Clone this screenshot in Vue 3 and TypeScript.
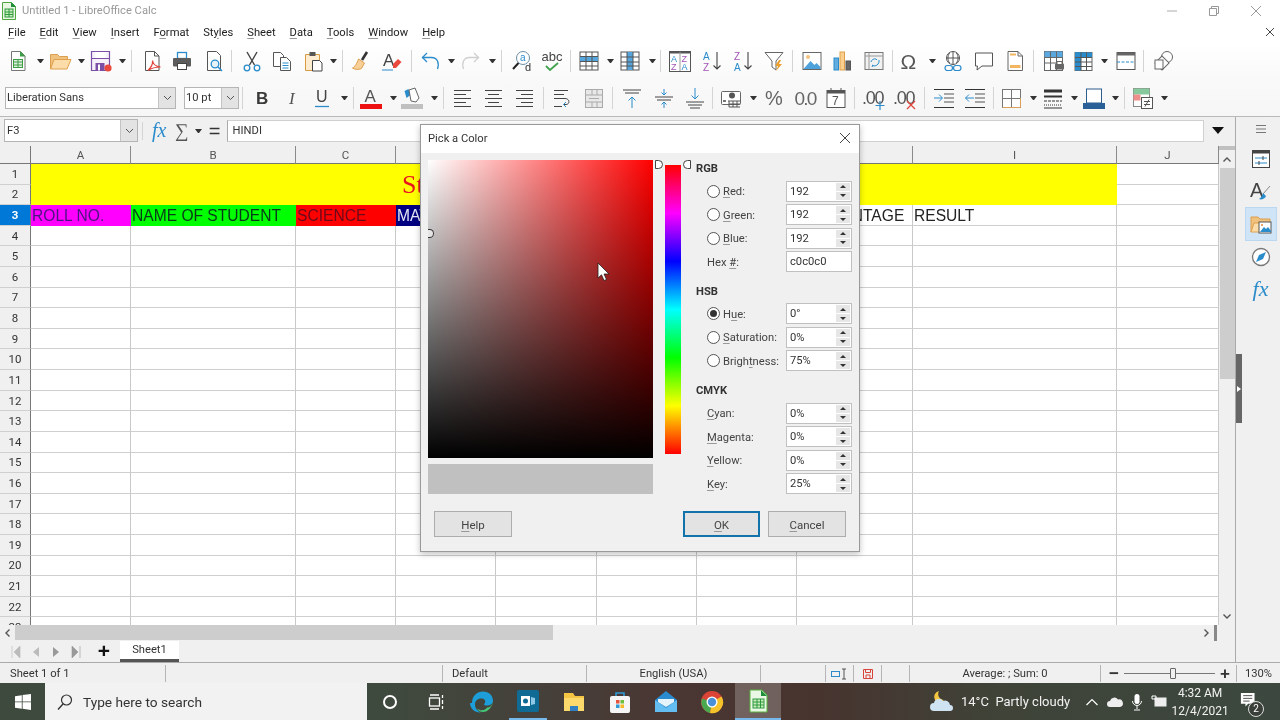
<script setup lang="ts">
type Slot = [string, number]

const FONT = `font-family="Liberation Sans, sans-serif"`
const B = '#2b8ccb'

const icons: Record<string, string> = {
  new: `<path d="M5.5 2.5h9l4.5 4.500v14.500H5.500z" fill="#fff" stroke="#777"/><path d="M14 2l5.500 5.500H14z" fill="#3f9c46"/><rect x="7.500" y="10.500" width="9" height="8" fill="#dff0dc" stroke="#3f9c46"/><path d="M7.500 13h9M7.500 16h9M12 10.500v8" stroke="#3f9c46"/>`,
  open: `<path d="M2.500 20V5.500h7l2 2h8v3" fill="#f0c27f" stroke="#dc9f4d"/><path d="M6 10.500h17L19 20H2.500z" fill="#fcdca9" stroke="#e0a04c"/>`,
  save: `<path d="M2.500 2.500h18v19h-18z" fill="#f5f0fa" stroke="#7b4fa6" stroke-width="1.200"/><path d="M2.500 9.500h18" stroke="#7b4fa6"/><path d="M6 3h11v6H6z" fill="#fff"/><path d="M6.500 14h9v7.500h-9z" fill="#7b4fa6"/><path d="M9 15.500h2v6H9z" fill="#fff"/><circle cx="19" cy="19" r="3.600" fill="#e9483d"/>`,
  pdf: `<path d="M5.500 2.500h9l4.500 4.500v14.500h-13.500z" fill="#fff" stroke="#555"/><path d="M14.500 2.500V7H19" fill="none" stroke="#555"/><path d="M8 21.500c3-3 5-7 4.500-10 .5 3.500 3 6 8 6.500-5 0-9 1-12.500 3.500z" fill="none" stroke="#e0443a" stroke-width="1.200"/>`,
  print: `<rect x="7.500" y="3.500" width="9" height="6" fill="#fff" stroke="#2b8ccb" stroke-width="1.300"/><rect x="3" y="9" width="18" height="8.500" rx="1" fill="#5c5c5c"/><rect x="7.500" y="14.500" width="9" height="6" fill="#fff" stroke="#444"/>`,
  preview: `<path d="M5.500 2.500h9l4 4v15h-13z" fill="#fff" stroke="#555"/><circle cx="13" cy="15" r="3.800" fill="#e6f3fb" stroke="${B}" stroke-width="1.300"/><path d="M16 18l4 4" stroke="${B}" stroke-width="1.600"/>`,
  cut: `<path d="M7 3l7.500 13M17 3L9.500 16" stroke="#444" fill="none" stroke-width="1.400"/><circle cx="7" cy="19" r="2.800" fill="none" stroke="${B}" stroke-width="1.300"/><circle cx="17" cy="19" r="2.800" fill="none" stroke="${B}" stroke-width="1.300"/>`,
  copy: `<path d="M3.500 3.500h7l3 3v11h-10z" fill="#fff" stroke="#555"/><path d="M10.500 8.500h6l4 4v9h-10z" fill="#fff" stroke="#555"/><path d="M12.500 14h6M12.500 16.500h6M12.500 19h6" stroke="${B}"/>`,
  paste: `<path d="M4.500 5.500h14v16h-14z" fill="#fdeccf" stroke="#d99a44"/><rect x="8.500" y="3" width="6" height="4" fill="#555"/><path d="M11.500 11.500h7l2.500 2.500v8h-9.500z" fill="#fff" stroke="#444"/>`,
  clone: `<path d="M18 3l-5 8" stroke="#333" stroke-width="2.600"/><path d="M9.500 10l6 4-3 5.500c-3 1.500-7 1-9-.5 2.500-1 4.500-5 6-9z" fill="#f7cf97" stroke="#dc9f4d"/>`,
  clear: `<text x="3" y="17" font-size="17" fill="#444" ${FONT}>A</text><path d="M13 15l5-5 3.500 3-5.500 6h-3z" fill="#e9483d"/><path d="M2 21h11" stroke="${B}"/>`,
  undo: `<path d="M19.500 20c2-6 0-11.500-6-11.500H4" fill="none" stroke="${B}" stroke-width="1.300"/><path d="M9 4L4.500 8.500 9 13" fill="none" stroke="${B}" stroke-width="1.300"/>`,
  redo: `<path d="M4.500 20c-2-6 0-11.500 6-11.500H20" fill="none" stroke="#cfcfcf" stroke-width="1.300"/><path d="M15 4l4.500 4.500L15 13" fill="none" stroke="#cfcfcf" stroke-width="1.300"/>`,
  find: `<circle cx="13" cy="9" r="6.500" fill="#fff" stroke="#6a8ea8"/><path d="M8.500 14L3 20" stroke="#222" stroke-width="2"/><text x="10" y="12" font-size="10" fill="${B}" ${FONT}>a</text><text x="15" y="22" font-size="11" fill="#333" ${FONT}>d</text>`,
  spell: `<text x="1.500" y="12" font-size="13" fill="#444" ${FONT}>abc</text><path d="M6 17l4 4 8-7" fill="none" stroke="#3fa34d" stroke-width="1.800"/>`,
  rows: `<rect x="3" y="3" width="18" height="18" fill="#fff" stroke="#555"/><rect x="3" y="7.500" width="18" height="5" fill="#56a5dc"/><path d="M3 7.500h18M3 12.500h18M3 17h18M9 3v18M15 3v18" stroke="#555"/>`,
  cols: `<rect x="3" y="3" width="18" height="18" fill="#fff" stroke="#555"/><rect x="9" y="3" width="6" height="18" fill="#56a5dc"/><path d="M3 8h18M3 13h18M3 17h18M9 3v18M15 3v18" stroke="#555"/>`,
  sort: `<rect x="1.500" y="2.500" width="21" height="20" fill="#fff" stroke="#555"/><path d="M1.500 3.500h21" stroke="#555" stroke-width="2"/><path d="M12 3v19" stroke="#999"/><text x="3" y="13" font-size="9" fill="#2b8ccb" ${FONT}>A</text><text x="3" y="21" font-size="9" fill="#a355b5" ${FONT}>Z</text><text x="13.500" y="13" font-size="9" fill="#a355b5" ${FONT}>Z</text><text x="13.500" y="21" font-size="9" fill="#2b8ccb" ${FONT}>A</text>`,
  asc: `<text x="3" y="11" font-size="10" fill="#2b8ccb" ${FONT}>A</text><text x="3" y="22" font-size="10" fill="#a355b5" ${FONT}>Z</text><path d="M17 3v17M13.500 16.500l3.500 3.500 3.500-3.500" fill="none" stroke="#444" stroke-width="1.100"/>`,
  desc: `<text x="3" y="11" font-size="10" fill="#a355b5" ${FONT}>Z</text><text x="3" y="22" font-size="10" fill="#2b8ccb" ${FONT}>A</text><path d="M17 3v17M13.500 16.500l3.500 3.500 3.500-3.500" fill="none" stroke="#444" stroke-width="1.100"/>`,
  filter: `<path d="M3 3.500h18L14 12v9l-4-3v-6z" fill="#fff" stroke="#666"/><path d="M17 11l-4 6h3l-2 5 6-7h-3l2-4z" fill="#eb9f2d"/>`,
  image: `<rect x="3" y="3.500" width="18" height="17" fill="#fff" stroke="#666"/><circle cx="8" cy="8" r="2" fill="#f4c27c"/><path d="M3.500 20l7-8 4 4 2-2 4 4v2h-17z" fill="#4da2dc"/>`,
  chart: `<rect x="4" y="9" width="4.500" height="12" fill="#62acdf" stroke="#2b8ccb"/><rect x="10" y="3" width="4.500" height="18" fill="#fbd08e" stroke="#e0a04c"/><rect x="16" y="12" width="4.500" height="9" fill="#666" stroke="#555"/>`,
  pivot: `<rect x="3" y="3.500" width="18" height="17" fill="#f2f2f2" stroke="#777"/><path d="M3 7h18M7 3.500v17" stroke="#999"/><path d="M17 11a5 5 0 0 1-5 6l-2-1M11 16l-1 2M9 13a4 4 0 0 1 5-3l1 1" fill="none" stroke="${B}"/>`,
  omega: `<text x="2.500" y="20" font-size="21" fill="#555" ${FONT}>Ω</text>`,
  link: `<circle cx="12" cy="9" r="6.500" fill="#fff" stroke="#555"/><path d="M5.500 9h13M12 2.500v13M8.500 4c-2 3-2 7 0 10M15.500 4c2 3 2 7 0 10" fill="none" stroke="#555"/><rect x="4" y="16.500" width="7.500" height="5" rx="2.500" fill="none" stroke="${B}" stroke-width="1.200"/><rect x="12.500" y="16.500" width="7.500" height="5" rx="2.500" fill="none" stroke="${B}" stroke-width="1.200"/>`,
  comment: `<path d="M3.500 4h17v13H10l-5 4 .5-4h-2z" fill="#fff" stroke="#555"/>`,
  header: `<path d="M5 2.500h10l4.500 4.500v14.500H5z" fill="#fff" stroke="#666"/><path d="M15 2.500V7h4.500" fill="none" stroke="#666"/><rect x="7" y="16" width="10.500" height="3" fill="#f3b562"/><rect x="7" y="4.500" width="6" height="2" fill="#f3b562"/>`,
  namedsheet: `<rect x="2.500" y="2.500" width="18" height="19" fill="#fff" stroke="#666"/><rect x="2.500" y="2.500" width="18" height="6" fill="#5ba8df"/><path d="M2.500 8.500h18M2.500 14h18M8.500 2.500v19M14.500 2.500v19" stroke="#666"/><rect x="13" y="14.500" width="9" height="6" rx="1" fill="#666"/><rect x="15" y="12.500" width="5" height="3" fill="#fff" stroke="#666"/>`,
  datagrid: `<rect x="4" y="3.500" width="17" height="18" fill="#fff" stroke="#666"/><rect x="4" y="3.500" width="6" height="18" fill="#2b8ccb"/><rect x="4" y="3.500" width="17" height="5" fill="#2b8ccb"/><path d="M4 8.500h17M4 13h17M4 17.500h17M10 3.500v18M15.500 3.500v18" stroke="#555"/>`,
  split: `<rect x="3" y="3.500" width="18" height="17" fill="#fff" stroke="#555"/><rect x="3" y="3.500" width="18" height="3" fill="#666"/><path d="M3 13h18" stroke="${B}" stroke-dasharray="3 1.500" stroke-width="1.200"/>`,
  shapes: `<circle cx="15" cy="8" r="5.500" fill="#fff" stroke="#666"/><rect x="5" y="9" width="10" height="10" transform="rotate(45 10 14)" fill="#fff" stroke="#666"/><rect x="3" y="11" width="8" height="9" fill="#fff" stroke="#666"/>`,
  bold: `<text x="6" y="18" font-size="17" font-weight="700" fill="#3a3a38" ${FONT}>B</text>`,
  italic: `<text x="8" y="18" font-size="17" font-style="italic" fill="#555" font-family="Liberation Serif, serif">I</text>`,
  under: `<text x="6" y="16" font-size="16" fill="#444" ${FONT}>U</text><path d="M5 20.500h14" stroke="${B}" stroke-width="1.300"/>`,
  fontcolor: `<text x="5.500" y="16" font-size="17" fill="#555" ${FONT}>A</text><rect x="1" y="18" width="22" height="5" fill="#ee1111"/>`,
  bgcolor: `<path d="M4.500 5l4-2 2 6-4 3z" fill="#2b8ccb"/><path d="M9 4l6-2 4 10-3 4-5-1z" fill="#fff" stroke="#666"/><rect x="1" y="18" width="22" height="5" fill="#c0c0c0"/>`,
  al: `<path d="M3 4.500h17M3 8.500h12M3 12.500h17M3 16.500h12M3 20.500h17" stroke="#444" stroke-width="1.100"/>`,
  ac: `<path d="M3 4.500h17M6 8.500h11M3 12.500h17M6 16.500h11M3 20.500h17" stroke="#444" stroke-width="1.100"/>`,
  ar: `<path d="M3 4.500h17M8 8.500h12M3 12.500h17M8 16.500h12M3 20.500h17" stroke="#444" stroke-width="1.100"/>`,
  wrap: `<path d="M3 4.500h14M3 8.500h10M3 20.500h8M3 12.500h11c5 0 5 6 1 6h-2" fill="none" stroke="#444"/><path d="M15 16l-2.500 2.500L15 21" fill="none" stroke="${B}"/>`,
  merge: `<rect x="3.500" y="3.500" width="17" height="18" fill="#e8e8e8" stroke="#aaa"/><path d="M3.500 9h17M3.500 16h17M10 3.500V9M15 3.500V9M10 16v5.500M15 16v5.500" stroke="#aaa"/><path d="M7 12.500h10" stroke="#aaa"/>`,
  vt: `<path d="M3 4h18M5 7h14" stroke="#444"/><path d="M12 22V11M8.500 14.500L12 11l3.500 3.500" fill="none" stroke="${B}"/>`,
  vc: `<path d="M3 11h18M5 14h14" stroke="#444"/><path d="M12 3v6M9.500 6.500L12 9l2.500-2.500M12 22v-6M9.500 18.500L12 16l2.500 2.500" fill="none" stroke="${B}"/>`,
  vb: `<path d="M3 16h18M5 19h14M7 22h10" stroke="#444"/><path d="M12 2v11M8.500 9.500L12 13l3.500-3.500" fill="none" stroke="${B}"/>`,
  currency: `<rect x="2.500" y="5.500" width="19" height="13" rx="1" fill="#fff" stroke="#666"/><circle cx="13" cy="9.500" r="3" fill="#555"/><path d="M9 15h12M10 18h11M10 21h11M10 15v6M14 15v6M18 15v6" stroke="#555"/><rect x="4" y="14" width="3" height="2" fill="#777"/>`,
  percent: `<text x="3" y="19" font-size="20" fill="#666" ${FONT}>%</text>`,
  number: `<text x="1.500" y="19" font-size="19" letter-spacing="-1.800" fill="#666" ${FONT}>0.0</text>`,
  date: `<rect x="3" y="4.500" width="18" height="17" fill="#fff" stroke="#555"/><rect x="3" y="4.500" width="18" height="3" fill="#555"/><path d="M7 2v3M17 2v3" stroke="#555"/><text x="8" y="19" font-size="12" fill="#555" ${FONT}>7</text>`,
  addDec: `<text x="0" y="18" font-size="18" letter-spacing="-1.200" fill="#555" ${FONT}>.00</text><path d="M18 15v9M13.500 19.500h9" stroke="${B}" stroke-width="1.200"/>`,
  delDec: `<text x="0" y="18" font-size="18" letter-spacing="-1.200" fill="#555" ${FONT}>.00</text><path d="M14 15l8 8M22 15l-8 8" stroke="#e0443a" stroke-width="1.200"/>`,
  indent: `<path d="M12 8h10M12 12h10M12 16h10" stroke="#555"/><path d="M2 3.500h20M2 21.500h20" stroke="#333"/><path d="M2 12h8M7 8.500l3.500 3.500L7 15.500" fill="none" stroke="${B}"/>`,
  outdent: `<path d="M12 8h10M12 12h10M12 16h10" stroke="#555"/><path d="M2 3.500h20M2 21.500h20" stroke="#333"/><path d="M11 12H2.500M6 8.500L2.500 12 6 15.500" fill="none" stroke="${B}"/>`,
  borders: `<rect x="3.500" y="3.500" width="18" height="18" fill="#fff" stroke="#777"/><path d="M12.500 3.500v18M3.500 12.500h18" stroke="#777"/><path d="M3.500 21.500h18M21.500 12v9.500" stroke="#d7a15c"/>`,
  bstyle: `<path d="M3 5h18" stroke="#333" stroke-width="3"/><path d="M3 10.500h18" stroke="#333" stroke-width="2"/><path d="M3 15h18" stroke="#333" stroke-dasharray="3 1"/><path d="M3 19h18" stroke="#333" stroke-dasharray="1 1"/><path d="M3 22h18" stroke="#333"/>`,
  bcolor: `<rect x="4.500" y="3" width="15" height="14" fill="#fff" stroke="#2d5f8e"/><rect x="1" y="17" width="22" height="6" fill="#2a6097"/>`,
  cond: `<rect x="2.500" y="2.500" width="16" height="18" fill="#fff" stroke="#888"/><rect x="2.500" y="2.500" width="16" height="6" fill="#87c89c"/><rect x="2.500" y="8.500" width="7" height="6" fill="#ee8f8b"/><rect x="10.500" y="11.500" width="11" height="11" fill="#fff" stroke="#555"/><path d="M13 15.500h6M13 18.500h6M18 13.500l-4 7" stroke="#555"/>`,
}

// turn the x centre of every slot into a flow gap after the slot before it
function place(slots: Slot[], start = 0) {
  let right = start
  return slots.map(([name, x]) => {
    const w = name === 'c' ? 7 : name === 's' ? 1 : 24
    const gap = x - w / 2 - right
    right = x + w / 2
    return { name, gap, kind: name === 'c' ? 'caret' : name === 's' ? 'sep' : 'icon' }
  })
}

const row1 = place([
  ['new', 18], ['c', 40], ['open', 60], ['c', 81], ['save', 101], ['c', 122], ['s', 131],
  ['pdf', 152], ['print', 182], ['preview', 214], ['s', 231], ['cut', 251.5], ['copy', 282],
  ['paste', 313], ['c', 333], ['s', 342], ['clone', 361], ['clear', 392], ['s', 411], ['undo', 430],
  ['c', 451], ['redo', 471], ['c', 492], ['s', 501], ['find', 522], ['spell', 552], ['s', 570],
  ['rows', 589], ['c', 610], ['cols', 630], ['c', 652], ['s', 660], ['sort', 680], ['asc', 711.5],
  ['desc', 743], ['filter', 774], ['s', 792], ['image', 811.5], ['chart', 842], ['pivot', 873.5],
  ['s', 892], ['omega', 910], ['c', 932], ['link', 953], ['comment', 984], ['header', 1015],
  ['s', 1033], ['namedsheet', 1054], ['datagrid', 1082.5], ['c', 1104], ['split', 1125.5], ['s', 1143],
  ['shapes', 1163.5],
])

const row2 = place([
  ['s', 242.5], ['bold', 261.5], ['italic', 293], ['under', 322], ['c', 344], ['s', 353], ['fontcolor', 371],
  ['c', 393], ['bgcolor', 412], ['c', 434], ['s', 443], ['al', 462.5], ['ac', 494], ['ar', 525],
  ['s', 543], ['wrap', 563], ['merge', 594], ['s', 612], ['vt', 632], ['vc', 663.5], ['vb', 694.5],
  ['s', 712], ['currency', 731], ['c', 753], ['percent', 774], ['number', 804.5], ['date', 836],
  ['s', 854], ['addDec', 874], ['delDec', 905], ['s', 924], ['indent', 944], ['outdent', 974.5],
  ['s', 993], ['borders', 1011], ['c', 1033], ['bstyle', 1052.5], ['c', 1074], ['bcolor', 1093.5],
  ['c', 1115], ['s', 1124], ['cond', 1143], ['c', 1164],
], 239)

const menus = [
  { pre: '', key: 'F', rest: 'ile' },
  { pre: '', key: 'E', rest: 'dit' },
  { pre: '', key: 'V', rest: 'iew' },
  { pre: '', key: 'I', rest: 'nsert' },
  { pre: 'F', key: 'o', rest: 'rmat' },
  { pre: 'St', key: 'y', rest: 'les' },
  { pre: '', key: 'S', rest: 'heet' },
  { pre: '', key: 'D', rest: 'ata' },
  { pre: '', key: 'T', rest: 'ools' },
  { pre: '', key: 'W', rest: 'indow' },
  { pre: '', key: 'H', rest: 'elp' },
]

const columns = ['A', 'B', 'C', 'D', 'E', 'F', 'G', 'H', 'I', 'J']
const headerCells: Record<string, { text: string; cls: string }> = {
  A: { text: 'ROLL NO.', cls: 'c-magenta' },
  B: { text: 'NAME OF STUDENT', cls: 'c-green' },
  C: { text: 'SCIENCE', cls: 'c-red' },
  D: { text: 'MATHS', cls: 'c-navy' },
  E: { text: 'ENGLISH', cls: '' },
  F: { text: 'HINDI', cls: '' },
  G: { text: 'TOTAL', cls: '' },
  H: { text: 'PERCENTAGE', cls: '' },
  I: { text: 'RESULT', cls: '' },
}

interface Field { pre: string; key: string; rest: string; value: string; radio?: boolean; checked?: boolean; plain?: boolean }
const colourGroups: { title: string; fields: Field[] }[] = [
  {
    title: 'RGB',
    fields: [
      { pre: '', key: 'R', rest: 'ed:', value: '192', radio: true },
      { pre: '', key: 'G', rest: 'reen:', value: '192', radio: true },
      { pre: '', key: 'B', rest: 'lue:', value: '192', radio: true },
      { pre: 'Hex ', key: '#', rest: ':', value: 'c0c0c0', plain: true },
    ],
  },
  {
    title: 'HSB',
    fields: [
      { pre: 'H', key: 'u', rest: 'e:', value: '0°', radio: true, checked: true },
      { pre: '', key: 'S', rest: 'aturation:', value: '0%', radio: true },
      { pre: 'Brigh', key: 't', rest: 'ness:', value: '75%', radio: true },
    ],
  },
  {
    title: 'CMYK',
    fields: [
      { pre: '', key: 'C', rest: 'yan:', value: '0%' },
      { pre: '', key: 'M', rest: 'agenta:', value: '0%' },
      { pre: '', key: 'Y', rest: 'ellow:', value: '0%' },
      { pre: '', key: 'K', rest: 'ey:', value: '25%' },
    ],
  },
]

const taskIcons: { name: string; svg: string; open?: boolean; active?: boolean }[] = [
  { name: 'cortana', svg: `<circle cx="12" cy="12" r="6" fill="none" stroke="#fff" stroke-width="2"/>` },
  { name: 'tasks', svg: `<path d="M6 5h9M6 19h9" stroke="#fff" stroke-width="1.300"/><rect x="5.500" y="8" width="10" height="8" fill="none" stroke="#fff" stroke-width="1.300"/><path d="M18.500 5v3M18.500 10v4M18.500 16v3" stroke="#fff" stroke-width="1.300"/>` },
  { name: 'edge', svg: `<path d="M2 13C2 6 7 1.500 13 1.500c6 0 10 4 10 9.500 0 3-3 4.500-6 4.500-2 0-3-.5-3-1.500 2-1 2-5-2-5.500-4-.5-7 2-7 6 0 4 3 7 6 8-6 .5-11-4-11-9.500z" fill="#1d9ed9"/><path d="M23 11c-.5 6-5 11-10 11-3 0-5-1.500-6-3.500 3 2.500 8 2.500 10-1 1 0 5 0 6-6.500z" fill="#46c77a"/>` },
  { name: 'outlook', open: true, svg: `<rect x="1" y="1" width="22" height="22" rx="2" fill="#0f6a94"/><rect x="5" y="7" width="9" height="10" fill="#fff"/><circle cx="9.500" cy="12" r="2.500" fill="#0f6a94"/><path d="M15 8l4 1v6l-4 1z" fill="#8fc8e6"/>` },
  { name: 'files', svg: `<path d="M2 3h9l2 3h9v15H2z" fill="#f4c542"/><path d="M2 8h20v13H2z" fill="#fbd96a"/><rect x="8" y="16" width="8" height="5" fill="#2f7fc2"/>` },
  { name: 'store', svg: `<rect x="2" y="6" width="20" height="17" rx="2" fill="#f5f5f5"/><path d="M8 6V3h8v3" fill="none" stroke="#2e9ad6" stroke-width="1.600"/><rect x="8" y="10" width="3.500" height="3.500" fill="#e8533f"/><rect x="12.500" y="10" width="3.500" height="3.500" fill="#6fbf3f"/><rect x="8" y="14.500" width="3.500" height="3.500" fill="#2e9ad6"/><rect x="12.500" y="14.500" width="3.500" height="3.500" fill="#f5b921"/>` },
  { name: 'mail', svg: `<path d="M1 10L12 1l11 9v12H1z" fill="#2a8bd0"/><path d="M1 10l11 8 11-8v12H1z" fill="#63bdf0"/><path d="M4 9h16v3l-8 5-8-5z" fill="#e7f3fb"/>` },
  { name: 'chrome', svg: `<circle cx="12" cy="12" r="11" fill="#dc4437"/><path d="M12 12L2 8.500A11 11 0 0 0 10 23z" fill="#4aa84f"/><path d="M12 12l9.500-5.500A11 11 0 0 1 10 23z" fill="#f5c329"/><circle cx="12" cy="12" r="5.500" fill="#fff"/><circle cx="12" cy="12" r="4.200" fill="#4a90d9"/>` },
  { name: 'calc', active: true, svg: `<path d="M4 1h12l5 5v17H4z" fill="#eaf7e4" stroke="#57b33f"/><path d="M15 1l6 6h-6z" fill="#1f8f3a"/><rect x="7" y="10" width="11" height="9" fill="#c9ecbc" stroke="#2e9a3e"/><path d="M7 13h11M7 16h11M11 10v9M14.500 10v9" stroke="#2e9a3e"/>` },
]
</script>

<template>
  <div class="app">
    <header class="top">
      <div class="titlebar">
        <svg class="doc-icon" width="14" height="18" viewBox="0 0 14 18">
          <path d="M.5.5h9l4 4v13H.5z" fill="#e9f6e2" stroke="#4fa83f" />
          <path d="M9 0l5 5H9z" fill="#1f8f3a" />
          <rect x="3" y="7" width="8" height="8" fill="#cbeebd" stroke="#2e9a3e" />
          <path d="M3 10h8M3 12.500h8M7 7v8" stroke="#2e9a3e" />
        </svg>
        <span class="doc-title">Untitled 1 - LibreOffice Calc</span>
        <div class="win-controls">
          <svg width="12" height="12" viewBox="0 0 12 12"><path d="M1 6h10" stroke="#aaa" /></svg>
          <svg width="12" height="12" viewBox="0 0 12 12"><path d="M1.500 3.500h7v7h-7zM3.500 3.500v-2h7v7h-2" fill="none" stroke="#999" /></svg>
          <svg width="12" height="12" viewBox="0 0 12 12"><path d="M1 1l10 10M11 1L1 11" stroke="#999" /></svg>
        </div>
      </div>

      <nav class="menubar">
        <span v-for="m in menus" :key="m.pre + m.key" class="menu">{{ m.pre }}<u>{{ m.key }}</u>{{ m.rest }}</span>
        <svg class="doc-close" width="10" height="10" viewBox="0 0 10 10"><path d="M1 1l8 8M9 1L1 9" stroke="#444" /></svg>
      </nav>

      <div class="toolbar toolbar-std">
        <template v-for="(item, i) in row1" :key="i">
          <svg v-if="item.kind === 'icon'" class="icon" width="24" height="24" viewBox="0 0 24 24" :style="{ marginLeft: item.gap + 'px' }" v-html="icons[item.name]" />
          <span v-else :class="item.kind" :style="{ marginLeft: item.gap + 'px' }" />
        </template>
      </div>

      <div class="toolbar toolbar-fmt">
        <div class="combo font-combo">
          <span class="combo-text">Liberation Sans</span>
          <span class="combo-btn"><svg width="9" height="6" viewBox="0 0 9 6"><path d="M1 1l3.500 3.500L8 1" fill="none" stroke="#555" /></svg></span>
        </div>
        <div class="combo size-combo">
          <span class="combo-text">10 pt</span>
          <span class="combo-btn"><svg width="9" height="6" viewBox="0 0 9 6"><path d="M1 1l3.500 3.500L8 1" fill="none" stroke="#555" /></svg></span>
        </div>
        <template v-for="(item, i) in row2" :key="i">
          <svg v-if="item.kind === 'icon'" class="icon" width="24" height="24" viewBox="0 0 24 24" :style="{ marginLeft: item.gap + 'px' }" v-html="icons[item.name]" />
          <span v-else :class="item.kind" :style="{ marginLeft: item.gap + 'px' }" />
        </template>
      </div>
    </header>

    <div class="workspace">
      <div class="main">
        <div class="formula-bar">
          <div class="combo name-box">
            <span class="combo-text">F3</span>
            <span class="combo-btn"><svg width="9" height="6" viewBox="0 0 9 6"><path d="M1 1l3.500 3.500L8 1" fill="none" stroke="#555" /></svg></span>
          </div>
          <span class="sep fb-sep" />
          <span class="fx">fx</span>
          <span class="sigma">∑</span>
          <span class="caret fb-caret" />
          <span class="equals">=</span>
          <div class="formula-input">HINDI</div>
          <span class="formula-drop" />
        </div>

        <div class="sheet-row">
          <div class="sheet-grid">
            <div class="corner" />
            <div v-for="c in columns" :key="c" class="col-head">{{ c }}</div>
            <div class="title-cell">Student Result Sheet</div>
            <template v-for="row in 23" :key="row">
              <div class="row-head" :class="{ active: row === 3 }">{{ row }}</div>
              <div v-if="row < 3" class="cell" />
              <template v-else>
                <div
                  v-for="c in columns"
                  :key="c"
                  class="cell"
                  :class="row === 3 ? headerCells[c]?.cls : ''"
                >{{ row === 3 ? headerCells[c]?.text : '' }}</div>
              </template>
            </template>
          </div>

          <div class="vscroll">
            <span class="split-v" />
            <svg class="sb-arrow" width="10" height="7" viewBox="0 0 10 7"><path d="M1.500 5.500L5 2l3.500 3.500" fill="none" stroke="#555" stroke-width="1.400" /></svg>
            <div class="vthumb-track"><div class="vthumb" /></div>
            <svg class="sb-arrow" width="10" height="7" viewBox="0 0 10 7"><path d="M1.500 1.500L5 5l3.500-3.500" fill="none" stroke="#555" stroke-width="1.400" /></svg>
          </div>
        </div>

        <div class="hscroll">
          <svg width="7" height="10" viewBox="0 0 7 10"><path d="M5.500 1.500L2 5l3.500 3.500" fill="none" stroke="#555" stroke-width="1.400" /></svg>
          <div class="hthumb-track"><div class="hthumb" /></div>
          <svg width="7" height="10" viewBox="0 0 7 10"><path d="M1.500 1.500L5 5 1.500 8.500" fill="none" stroke="#555" stroke-width="1.400" /></svg>
          <span class="split-h" />
        </div>

        <div class="tabbar">
          <div class="tab-nav">
            <svg width="10" height="12" viewBox="0 0 10 12"><path d="M1 0v12M9 0v12L3 6z" fill="#bbb" stroke="#bbb" stroke-width=".6" /></svg>
            <svg width="10" height="12" viewBox="0 0 10 12"><path d="M8 1v10L2 6z" fill="#bbb" /></svg>
            <svg width="10" height="12" viewBox="0 0 10 12"><path d="M2 1v10l6-5z" fill="#999" /></svg>
            <svg width="10" height="12" viewBox="0 0 10 12"><path d="M9 0v12M1 0v12l6-6z" fill="#999" stroke="#999" stroke-width=".6" /></svg>
          </div>
          <span class="tab-add">+</span>
          <div class="tab">Sheet1</div>
        </div>
      </div>

      <aside class="sidebar">
        <svg width="12" height="10" viewBox="0 0 12 10"><path d="M1 1.500h10M1 5h10M1 8.500h10" stroke="#777" /></svg>
        <button class="side-btn"><svg width="20" height="20" viewBox="0 0 20 20"><rect x="1.500" y="1.500" width="17" height="17" fill="#fff" stroke="#444" /><rect x="1.500" y="1.500" width="17" height="3" fill="#444" /><path d="M4 9h12M4 14h12" stroke="#2b8ccb" /><path d="M12 7v4M8 12v4" stroke="#444" /></svg></button>
        <button class="side-btn"><svg width="22" height="22" viewBox="0 0 22 22"><text x="0" y="17" font-size="20" fill="#444" font-family="Liberation Sans, sans-serif">A</text><path d="M20 6l-7 8" stroke="#888" /><path d="M13 13l3 3c-1 3-5 4-7 3 2-1 3-3 4-6z" fill="#2b8ccb" /></svg></button>
        <button class="side-btn selected"><svg width="22" height="20" viewBox="0 0 22 20"><path d="M1 18V3h7l2 2h10v4" fill="#f0c27f" stroke="#dc9f4d" /><path d="M1 18l3-9h15l-3 9z" fill="#fcdca9" stroke="#e0a04c" /><rect x="9" y="8" width="12" height="11" fill="#fff" stroke="#555" /><path d="M10 18l4-5 2 2 2-2 3 4v1z" fill="#2b8ccb" /><circle cx="12" cy="11" r="1" fill="#e9883d" /></svg></button>
        <button class="side-btn"><svg width="20" height="20" viewBox="0 0 20 20"><circle cx="10" cy="10" r="8.500" fill="#fff" stroke="#777" stroke-width="1.300" /><path d="M15 5l-3 7-7 3 3-7z" fill="#2b8ccb" /></svg></button>
        <span class="side-fx">fx</span>
        <div class="deck-handle"><span /></div>
      </aside>
    </div>

    <footer class="statusbar">
      <span class="st">Sheet 1 of 1</span>
      <span class="st" />
      <span class="st st-c st-default">Default</span>
      <span class="st st-c">English (USA)</span>
      <span class="st" />
      <span class="st st-c"><svg width="20" height="12" viewBox="0 0 20 12"><rect x="1.500" y="3.500" width="8" height="5" fill="none" stroke="#2b8ccb" /><path d="M14 1v10M12 1h4M12 11h4" stroke="#555" /></svg></span>
      <span class="st st-c"><svg width="12" height="12" viewBox="0 0 12 12"><path d="M1.500 1.500h9v9h-9zM3.500 1.500v3h5v-3M4 10.500V7h4v3.500" fill="none" stroke="#d9443a" /></svg></span>
      <span class="st" />
      <span class="st st-c">Average: ; Sum: 0</span>
      <span class="st zoom-cell">
        <span class="zoom-sign">−</span>
        <span class="zoom-track"><span class="zoom-knob" /></span>
        <span class="zoom-sign">+</span>
      </span>
      <span class="st st-c">130%</span>
    </footer>

    <div class="taskbar">
      <div class="start">
        <svg width="16" height="16" viewBox="0 0 16 16"><path d="M0 2.200l6.800-1v6.300H0zM7.600 1.100L16 0v7.500H7.600zM0 8.300h6.800v6.400L0 13.800zM7.600 8.300H16V16l-8.400-1.200z" fill="#fff" /></svg>
      </div>
      <div class="search">
        <svg width="18" height="18" viewBox="0 0 18 18"><circle cx="10.500" cy="7" r="5" fill="none" stroke="#333" stroke-width="1.200" /><path d="M7 11l-5 5.500" stroke="#333" stroke-width="1.400" /></svg>
        <span>Type here to search</span>
      </div>
      <div class="task-icons">
        <div v-for="t in taskIcons" :key="t.name" class="task" :class="{ open: t.open, active: t.active }">
          <svg width="24" height="24" viewBox="0 0 24 24" v-html="t.svg" />
        </div>
      </div>
      <div class="tray">
        <svg class="weather" width="24" height="24" viewBox="0 0 24 24"><path d="M9 1a6 6 0 0 0 5 9 6 6 0 0 1-9 0 6 6 0 0 1 4-9z" fill="#f5c542" /><path d="M4 21a4 4 0 0 1 0-8 5 5 0 0 1 9-2 5 5 0 0 1 7 4 3 3 0 0 1 0 6z" fill="#cfe3f3" /></svg>
        <span class="weather-text">14°C&nbsp;&nbsp;Partly cloudy</span>
        <svg class="tray-i chevron" width="14" height="10" viewBox="0 0 14 10"><path d="M1.500 8L7 2.500 12.500 8" fill="none" stroke="#fff" stroke-width="1.200" /></svg>
        <svg class="tray-i" width="16" height="12" viewBox="0 0 16 12"><path d="M3 11a3 3 0 0 1 0-6 4.500 4.500 0 0 1 8-1.500A3.500 3.500 0 0 1 13 11z" fill="#eee" /></svg>
        <svg class="tray-i" width="12" height="18" viewBox="0 0 12 18"><rect x="3.500" y="1" width="5" height="10" rx="2.500" fill="#fff" /><path d="M1.500 8a4.500 4.500 0 0 0 9 0M6 13v3M3 17h6" fill="none" stroke="#fff" /></svg>
        <svg class="tray-i" width="16" height="14" viewBox="0 0 16 14"><rect x="4" y="3" width="11" height="8" fill="#eee" stroke="#eee" /><path d="M1 1h4v3H1z" fill="none" stroke="#fff" /></svg>
        <div class="clock"><span>4:32 AM</span><span>12/4/2021</span></div>
        <div class="notif">
          <svg width="20" height="20" viewBox="0 0 22 22"><path d="M1 1h15v12H9l-3 3v-3H1z" fill="#fff" /><path d="M3.500 4h10M3.500 7h10M3.500 10h7" stroke="#444" /></svg>
          <span class="notif-badge">2</span>
        </div>
      </div>
    </div>

    <!-- dialog floats over the sheet -->
    <section class="dialog">
      <div class="dlg-title">
        <span>Pick a Color</span>
        <svg width="12" height="12" viewBox="0 0 12 12"><path d="M1 1l10 10M11 1L1 11" stroke="#444" /></svg>
      </div>
      <div class="dlg-body">
        <div class="picker">
          <div class="field"><span class="field-marker" /></div>
          <div class="preview" />
        </div>
        <div class="hue-col">
          <span class="hue-marker left" />
          <div class="hue-bar" />
          <span class="hue-marker right" />
        </div>
        <div class="values">
          <div v-for="g in colourGroups" :key="g.title" class="group">
            <div class="group-title">{{ g.title }}</div>
            <div v-for="f in g.fields" :key="f.key + f.rest" class="field-row">
              <span v-if="f.radio" class="radio" :class="{ checked: f.checked }" />
              <label class="field-label">{{ f.pre }}<u>{{ f.key }}</u>{{ f.rest }}</label>
              <div class="spin-input">
                <span>{{ f.value }}</span>
                <div v-if="!f.plain" class="spin">
                  <i class="up" />
                  <i class="down" />
                </div>
              </div>
            </div>
          </div>
        </div>
      </div>
      <div class="dlg-footer">
        <button class="btn"><u>H</u>elp</button>
        <div class="dlg-actions">
          <button class="btn primary"><u>O</u>K</button>
          <button class="btn"><u>C</u>ancel</button>
        </div>
      </div>
    </section>

    <svg class="cursor" width="14" height="20" viewBox="0 0 14 20"><path d="M1 1v15l3.500-3.200L7 18.500l2.500-1-2.500-5.500H12z" fill="#fff" stroke="#222" stroke-width=".8" /></svg>
  </div>
</template>

<style scoped>
.app {
  position: relative;
  width: 1280px;
  height: 720px;
  overflow: hidden;
  display: flex;
  flex-direction: column;
  background: #f0f0f0;
  font-family: Roboto, "Noto Sans", sans-serif;
  font-size: 11.2px;
  color: #333;
  filter: blur(0.3px);
}

u {
  text-decoration-color: #999;
  text-underline-offset: 2px;
}

/* top chrome */
.top {
  height: 117px;
  flex: none;
  background: linear-gradient(#fff, #fff 44px, #f9f9f9 80px, #f6f6f6);
  border-bottom: 1px solid #b9b9b9;
  box-sizing: border-box;
}

.titlebar {
  height: 21px;
  display: flex;
  align-items: center;
  padding-left: 2px;
}

.doc-icon {
  margin-right: 6px;
}

.doc-title {
  color: #999;
}

.win-controls {
  margin-left: auto;
  display: flex;
  gap: 30px;
  padding-right: 18px;
}

.menubar {
  height: 22px;
  display: flex;
  align-items: center;
  gap: 14px;
  padding-left: 8px;
  position: relative;
}

.menu {
  color: #222;
}

.doc-close {
  margin-left: auto;
  margin-right: 5px;
}

.toolbar {
  display: flex;
  align-items: center;
}

.toolbar-std {
  height: 36px;
}

.toolbar-fmt {
  height: 37px;
}

.icon {
  flex: none;
}

.caret {
  flex: none;
  width: 7px;
  height: 4px;
  box-sizing: border-box;
  border-left: 3.5px solid transparent;
  border-right: 3.5px solid transparent;
  border-top: 4px solid #333;
}

.sep {
  flex: none;
  width: 1px;
  height: 22px;
  background: #d4d4d4;
}

.combo {
  flex: none;
  display: flex;
  height: 22px;
  box-sizing: border-box;
  background: #fff;
  border: 1px solid #b5b5b5;
}

.font-combo {
  width: 171px;
  margin-left: 5px;
}

.size-combo {
  width: 55px;
  margin-left: 8px;
}

.combo-text {
  flex: 1;
  padding-left: 1px;
  line-height: 20px;
  color: #333;
  overflow: hidden;
}

.combo-btn {
  width: 16px;
  display: flex;
  align-items: center;
  justify-content: center;
  background: #e3e3e3;
  border-left: 1px solid #c4c4c4;
}

/* formula bar and sheet */
.workspace {
  flex: 1;
  min-height: 0;
  display: flex;
}

.main {
  width: 1235px;
  flex: none;
  display: flex;
  flex-direction: column;
}

.formula-bar {
  height: 29px;
  flex: none;
  display: flex;
  align-items: center;
  box-sizing: border-box;
  padding-bottom: 2px;
}

.name-box {
  width: 134px;
  height: 23px;
  margin-left: 4px;
  margin-right: 4px;
}

.name-box .combo-text {
  line-height: 21px;
  padding-left: 2px;
}

.fb-sep {
  height: 18px;
}

.fx {
  margin-left: 9px;
  width: 16px;
  font-family: "Liberation Serif", serif;
  font-style: italic;
  font-size: 20px;
  color: #2b8ccb;
}

.sigma {
  margin-left: 7px;
  font-size: 19px;
  line-height: 20px;
  color: #555;
  font-family: "Liberation Serif", serif;
}

.fb-caret {
  margin-left: 6px;
}

.equals {
  margin-left: 6px;
  width: 14px;
  text-align: center;
  font-size: 20px;
  line-height: 20px;
  font-family: "Liberation Sans", sans-serif;
  color: #333;
}

.formula-input {
  margin-left: 5px;
  width: 977px;
  height: 22px;
  box-sizing: border-box;
  background: #fff;
  border: 1px solid #d0d0d0;
  border-left-color: #aaa;
  padding-left: 5px;
  line-height: 20px;
  flex: none;
}

.formula-drop {
  margin-left: 8px;
  border-left: 6.5px solid transparent;
  border-right: 6.5px solid transparent;
  border-top: 7px solid #111;
}

.sheet-row {
  height: 479px;
  flex: none;
  display: flex;
}

.sheet-grid {
  width: 1219px;
  flex: none;
  display: grid;
  grid-template-columns: 31px 100px 165px 100px 100px 101px 100px 100px 116px 204px 102px;
  grid-template-rows: 18px;
  grid-auto-rows: 20.62px;
  overflow: hidden;
  background: #fff;
}

.corner,
.col-head,
.row-head {
  background: #f0f0f0;
  box-sizing: border-box;
  display: flex;
  align-items: center;
  justify-content: center;
  font-size: 11.5px;
  color: #555;
}

.corner {
  border-right: 1px solid #777;
  border-bottom: 1px solid #777;
}

.col-head {
  border-right: 1px solid #8a8a8a;
  border-bottom: 1px solid #777;
}

.col-head:last-of-type {
  border-right-color: #bbb;
}

.row-head {
  border-right: 1px solid #777;
  border-bottom: 1px solid #d0d0d0;
  color: #333;
}

.row-head.active {
  background: #0078d7;
  color: #fff;
  font-weight: 700;
}

.cell {
  box-sizing: border-box;
  border-right: 1px solid #c9c9c9;
  border-bottom: 1px solid #cfcfcf;
  font-family: "Liberation Sans", sans-serif;
  font-size: 15.6px;
  line-height: 21px;
  color: #222;
  white-space: nowrap;
  overflow: hidden;
  padding-left: 1px;
}

.title-cell {
  grid-column: 2 / 11;
  grid-row: 2 / 4;
  background: #ffff00;
  color: #e8141e;
  font-family: "Liberation Serif", serif;
  font-size: 26px;
  line-height: 42px;
  padding-left: 371px;
  box-sizing: border-box;
  white-space: nowrap;
  overflow: hidden;
}

.c-magenta {
  background: #ff00ff;
  color: #4b1480;
  border-color: #ff00ff;
}

.c-green {
  background: #00ff00;
  color: #0a3a1a;
  border-color: #00ff00;
}

.c-red {
  background: #ff0000;
  color: #6a0a1a;
  border-color: #ff0000;
}

.c-navy {
  background: #000080;
  color: #e6e6f5;
  border-color: #000080;
}

.vscroll {
  width: 16px;
  flex: none;
  display: flex;
  flex-direction: column;
  align-items: center;
  background: #f0f0f0;
}

.split-v {
  width: 16px;
  height: 4px;
  background: #c0c0c0;
  flex: none;
}

.sb-arrow {
  flex: none;
  margin: 6px 0 5px;
}

.vthumb-track {
  flex: 1;
  width: 15px;
}

.vthumb {
  height: 211px;
  background: #cdcdcd;
}

.hscroll {
  height: 16px;
  flex: none;
  display: flex;
  align-items: center;
  padding-left: 4px;
}

.hthumb-track {
  width: 1186px;
  margin: 0 2px 0 4px;
  height: 16px;
}

.hthumb {
  width: 538px;
  height: 15px;
  background: #cdcdcd;
}

.split-h {
  width: 3px;
  height: 16px;
  margin-left: 4px;
  background: #888;
}

.tabbar {
  flex: 1;
  display: flex;
  align-items: stretch;
}

.tab-nav {
  width: 88px;
  padding-left: 11px;
  box-sizing: border-box;
  display: flex;
  align-items: center;
  gap: 10px;
}

.tab-add {
  width: 32px;
  text-align: center;
  font-family: "Liberation Sans", sans-serif;
  font-size: 21px;
  font-weight: 700;
  line-height: 20px;
  color: #111;
}

.tab {
  width: 59px;
  height: 21px;
  box-sizing: border-box;
  text-align: center;
  background: #fff;
  border-bottom: 3px solid #555;
  line-height: 18px;
}

.sidebar {
  flex: 1;
  position: relative;
  border-left: 1px solid #aaa;
  display: flex;
  flex-direction: column;
  align-items: center;
  padding: 7px 0 0 5px;
}

.side-btn {
  width: 30px;
  height: 32px;
  margin-top: 0.7px;
  padding: 0;
  border: 0;
  background: none;
  display: flex;
  align-items: center;
  justify-content: center;
}

.sidebar > svg {
  margin-bottom: 8px;
}

.side-btn.selected {
  background: #cfe4f7;
  outline: 1px solid #bcd8f0;
}

.side-fx {
  margin-top: 1px;
  height: 32px;
  font-family: "Liberation Serif", serif;
  font-style: italic;
  font-size: 22px;
  line-height: 30px;
  color: #2b8ccb;
}

.deck-handle {
  position: absolute;
  left: 0;
  top: 237px;
  width: 6px;
  height: 69px;
  background: #666;
  display: flex;
  align-items: center;
}

.deck-handle span {
  border-left: 4px solid #fff;
  border-top: 3px solid transparent;
  border-bottom: 3px solid transparent;
  margin-left: 1px;
}

/* status bar */
.statusbar {
  height: 21px;
  flex: none;
  display: grid;
  grid-template-columns: 166px 277px 144px 174px 65px 28px 28px 28px 191px 136px 43px;
  box-sizing: border-box;
  border-top: 1px solid #aaa;
  background: #f0f0f0;
}

.st {
  display: flex;
  align-items: center;
  padding-left: 10px;
  box-sizing: border-box;
  border-right: 1px solid #b5b5b5;
  margin: 2px 0;
  line-height: 1;
  white-space: nowrap;
}

.st:last-child {
  border-right: 0;
}

.st-c {
  justify-content: center;
  padding-left: 0;
}

.st-default {
  justify-content: flex-start;
  padding-left: 9px;
}

.zoom-cell {
  padding: 0 6px 0 8px;
  gap: 5px;
}

.zoom-sign {
  font-size: 17px;
  font-family: "Liberation Sans", sans-serif;
  font-weight: 700;
  color: #333;
  line-height: 1;
}

.zoom-track {
  flex: 1;
  height: 1px;
  background: #777;
  position: relative;
}

.zoom-knob {
  position: absolute;
  left: 46px;
  top: -5px;
  width: 4px;
  height: 9px;
  background: #f0f0f0;
  border: 1px solid #666;
  border-radius: 1px;
}

/* taskbar */
.taskbar {
  height: 37px;
  flex: none;
  display: flex;
  align-items: stretch;
  color: #fff;
  background: linear-gradient(to right, #3f4a3e 0, #3f4a3e 30%, #45403a 42%, #4a3733 52%, #47342f 64%, #3f4338 78%, #3c483f 100%);
}

.start {
  width: 45px;
  flex: none;
  display: flex;
  align-items: center;
  justify-content: center;
}

.search {
  width: 322px;
  flex: none;
  background: #f2f2f2;
  color: #333;
  display: flex;
  align-items: center;
  gap: 9px;
  padding-left: 11px;
  box-sizing: border-box;
  font-size: 13.7px;
}

.task-icons {
  display: flex;
  flex: none;
}

.task {
  width: 46px;
  display: flex;
  align-items: center;
  justify-content: center;
  box-sizing: border-box;
}

.task.open {
  border-bottom: 2px solid #76b9ed;
  border-image: linear-gradient(to right, transparent 10%, #76b9ed 10%, #76b9ed 90%, transparent 90%) 1;
}

.task.active {
  background: rgba(255, 255, 255, 0.22);
  border-bottom: 2px solid #76b9ed;
}

.tray {
  flex: 1;
  min-width: 0;
  display: flex;
  align-items: center;
}

.weather {
  margin-left: 149px;
  flex: none;
}

.weather-text {
  margin-left: 7px;
  font-size: 13px;
  white-space: nowrap;
  color: #f2f2f2;
}

.tray-i {
  flex: none;
}

.chevron {
  margin-left: 15px;
}

.tray-i + .tray-i {
  margin-left: 8px;
}

.clock {
  width: 62px;
  flex: none;
  margin-left: 2px;
  display: flex;
  flex-direction: column;
  align-items: center;
  font-size: 12px;
  line-height: 18px;
  color: #f2f2f2;
}

.notif {
  position: relative;
  flex: none;
  margin-left: 9px;
  display: flex;
}

.notif-badge {
  position: absolute;
  right: -4px;
  bottom: -5px;
  width: 14px;
  height: 14px;
  border-radius: 50%;
  background: #3a3f3a;
  border: 1px solid #ddd;
  font-size: 10px;
  line-height: 14px;
  text-align: center;
  color: #fff;
}

/* colour dialog */
.dialog {
  position: absolute;
  left: 420px;
  top: 124px;
  width: 440px;
  height: 428px;
  box-sizing: border-box;
  display: flex;
  flex-direction: column;
  background: #f0f0f0;
  border: 1px solid #9a9a9a;
  box-shadow: 0 2px 6px rgba(0, 0, 0, 0.25);
}

.dlg-title {
  height: 28px;
  flex: none;
  display: flex;
  align-items: center;
  justify-content: space-between;
  background: #fff;
  padding: 0 8px 2px 7px;
  box-sizing: border-box;
  color: #333;
}

.dlg-body {
  display: flex;
  padding-left: 7px;
  height: 341px;
  flex: none;
}

.picker {
  width: 225px;
  flex: none;
  padding-top: 7px;
}

.field {
  position: relative;
  height: 298px;
  background:
    linear-gradient(to top, #000, rgba(0, 0, 0, 0)),
    linear-gradient(to right, #fff, #ff0000);
}

.field-marker {
  position: absolute;
  left: 0;
  top: 69px;
  width: 6px;
  height: 9px;
  box-sizing: border-box;
  border: 1px solid #333;
  border-left: 0;
  border-radius: 0 5px 5px 0;
  background: rgba(255, 255, 255, 0.6);
}

.preview {
  height: 30px;
  margin-top: 6px;
  background: #c0c0c0;
}

.hue-col {
  position: relative;
  width: 16px;
  flex: none;
  margin-left: 12px;
  padding-top: 12px;
}

.hue-bar {
  height: 289px;
  background: linear-gradient(#ff0000, #ff00ff 16.66%, #0000ff 33.33%, #00ffff 50%, #00ff00 66.66%, #ffff00 83.33%, #ff0000);
}

.hue-marker {
  position: absolute;
  top: 7px;
  width: 8px;
  height: 9px;
  box-sizing: border-box;
  border: 1px solid #444;
  background: #fff;
}

.hue-marker.left {
  left: -10px;
  border-radius: 0 5px 5px 0;
}

.hue-marker.right {
  right: -10px;
  border-radius: 5px 0 0 5px;
}

.values {
  margin-left: 15px;
  width: 156px;
  flex: none;
  padding-top: 7px;
}

.group + .group {
  margin-top: 9.5px;
}

.group-title {
  height: 16px;
  line-height: 18px;
  font-weight: 700;
  color: #333;
  margin-bottom: 3.25px;
}

.field-row {
  height: 23.5px;
  display: flex;
  align-items: center;
  padding-left: 11px;
}

.radio {
  flex: none;
  width: 13px;
  height: 13px;
  box-sizing: border-box;
  border: 1px solid #555;
  border-radius: 50%;
  background: #fff;
  margin-right: 3px;
  position: relative;
}

.radio.checked::after {
  content: "";
  position: absolute;
  inset: 2px;
  border-radius: 50%;
  background: #333;
}

.field-label {
  flex: 1;
  padding-top: 1px;
  color: #444;
  white-space: nowrap;
}

.spin-input {
  flex: none;
  width: 66px;
  height: 21px;
  box-sizing: border-box;
  display: flex;
  align-items: center;
  justify-content: space-between;
  background: #fff;
  border: 1px solid #c0c0c0;
  padding-left: 3px;
  color: #333;
}

.spin {
  width: 14px;
  margin-right: 1px;
  height: 17px;
  display: flex;
  flex-direction: column;
  gap: 1px;
}

.spin i {
  flex: 1;
  background: #e6e6e6;
  display: flex;
  align-items: center;
  justify-content: center;
}

.spin i::before {
  content: "";
  border-left: 3px solid transparent;
  border-right: 3px solid transparent;
}

.spin .up::before {
  border-bottom: 3px solid #333;
}

.spin .down::before {
  border-top: 3px solid #333;
}

.dlg-footer {
  display: flex;
  justify-content: space-between;
  padding: 17px 13px 0 13px;
}

.dlg-actions {
  display: flex;
  gap: 8px;
}

.btn {
  width: 78px;
  height: 26px;
  padding: 1px 0 0;
  background: #e3e3e3;
  border: 1px solid #adadad;
  font-family: inherit;
  font-size: 11.5px;
  color: #444;
}

.btn.primary {
  width: 77px;
  border: 2px solid #1273ab;
}

.cursor {
  position: absolute;
  left: 597px;
  top: 262px;
}
</style>

<style>
body {
  margin: 0;
}
</style>
